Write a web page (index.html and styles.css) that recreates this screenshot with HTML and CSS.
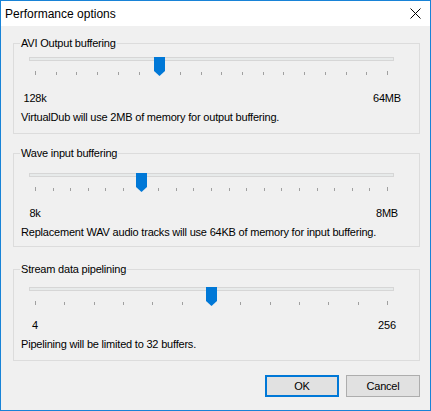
FILE: index.html
```html
<!DOCTYPE html>
<html lang="en">
<head>
    <meta charset="UTF-8">
    <title>Performance options</title>
    <link rel="stylesheet" href="styles.css">
</head>
<body>
    <div class="dialog">
        <div class="titlebar">
            <span class="title">Performance options</span>
            <svg class="close" width="11" height="11" viewBox="0 0 11 11">
                <path d="M0.5 0.5L10.5 10.5M10.5 0.5L0.5 10.5" stroke="#000" stroke-width="1" fill="none"/>
            </svg>
        </div>

        <div class="dialog-body">
            <!-- AVI output buffering -->
            <fieldset class="group group-avi">
                <legend>AVI Output buffering</legend>
                <div class="slider">
                    <div class="track"></div>
                    <div class="ticks">
                        <span class="tick tick-end"></span>
                        <span class="tick"></span><span class="tick"></span><span class="tick"></span><span class="tick"></span>
                        <span class="tick"></span><span class="tick"></span><span class="tick"></span><span class="tick"></span>
                        <span class="tick"></span><span class="tick"></span><span class="tick"></span><span class="tick"></span>
                        <span class="tick"></span><span class="tick"></span><span class="tick"></span><span class="tick"></span>
                        <span class="tick tick-end"></span>
                    </div>
                    <svg class="thumb" style="--pos: 0.3529" width="11" height="19" viewBox="0 0 11 19">
                        <polygon points="0,0 11,0 11,14 5.5,19 0,14" fill="#0078d7"/>
                    </svg>
                </div>
                <div class="scale"><span>128k</span><span>64MB</span></div>
                <p class="desc">VirtualDub will use 2MB of memory for output buffering.</p>
            </fieldset>

            <!-- Wave input buffering -->
            <fieldset class="group group-wave">
                <legend>Wave input buffering</legend>
                <div class="slider">
                    <div class="track"></div>
                    <div class="ticks">
                        <span class="tick tick-end"></span>
                        <span class="tick"></span><span class="tick"></span><span class="tick"></span><span class="tick"></span>
                        <span class="tick"></span><span class="tick"></span><span class="tick"></span><span class="tick"></span>
                        <span class="tick"></span><span class="tick"></span><span class="tick"></span><span class="tick"></span>
                        <span class="tick"></span><span class="tick"></span><span class="tick"></span><span class="tick"></span>
                        <span class="tick"></span><span class="tick"></span><span class="tick"></span>
                        <span class="tick tick-end"></span>
                    </div>
                    <svg class="thumb" style="--pos: 0.3" width="11" height="19" viewBox="0 0 11 19">
                        <polygon points="0,0 11,0 11,14 5.5,19 0,14" fill="#0078d7"/>
                    </svg>
                </div>
                <div class="scale"><span>8k</span><span>8MB</span></div>
                <p class="desc">Replacement WAV audio tracks will use 64KB of memory for input buffering.</p>
            </fieldset>

            <!-- Stream data pipelining -->
            <fieldset class="group group-pipe">
                <legend>Stream data pipelining</legend>
                <div class="slider">
                    <div class="track"></div>
                    <div class="ticks">
                        <span class="tick tick-end"></span>
                        <span class="tick"></span><span class="tick"></span><span class="tick"></span><span class="tick"></span>
                        <span class="tick"></span><span class="tick"></span><span class="tick"></span><span class="tick"></span>
                        <span class="tick"></span><span class="tick"></span><span class="tick"></span>
                        <span class="tick tick-end"></span>
                    </div>
                    <svg class="thumb" style="--pos: 0.5" width="11" height="19" viewBox="0 0 11 19">
                        <polygon points="0,0 11,0 11,14 5.5,19 0,14" fill="#0078d7"/>
                    </svg>
                </div>
                <div class="scale"><span>4</span><span>256</span></div>
                <p class="desc">Pipelining will be limited to 32 buffers.</p>
            </fieldset>

            <div class="buttons">
                <button class="btn btn-default">OK</button>
                <button class="btn">Cancel</button>
            </div>
        </div>
    </div>
</body>
</html>
```

FILE: styles.css
```css
body {
    margin: 0;
    font-family: 'Liberation Sans', Arial, sans-serif;
    font-size: 11px;
    line-height: 13px;
    letter-spacing: -0.2px;
    color: #000;
    background: #f0f0f0;
}

.dialog {
    width: 431px;
    height: 411px;
    box-sizing: border-box;
    border: 1px solid #1883d7;
    background: #f0f0f0;
}

.titlebar {
    height: 25px;
    background: #fff;
    display: flex;
    align-items: center;
    justify-content: space-between;
    padding: 0 9px 0 4px;
}

.title {
    font-size: 12px;
    line-height: 14px;
    letter-spacing: 0;
}

.close {
    display: block;
}

.dialog-body {
    padding: 11px 10px 0 12px;
}

/* group boxes */
.group {
    margin: 0;
    min-width: 0;
    border: 1px solid #dcdcdc;
    padding: 0 18px 9px 7px;
}

.group legend {
    padding: 0 1px;
    margin-left: -1px;
    line-height: 13px;
}

.group-wave {
    margin-top: 13px;
    padding-bottom: 7px;
}

.group-pipe {
    margin-top: 16px;
}

/* slider */
.slider {
    position: relative;
    height: 24px;
    margin: 7px 7px 0 8px;
}

.group-wave .slider {
    margin-top: 13px;
}

.group-pipe .slider {
    margin-top: 11px;
}

.track {
    height: 4px;
    box-sizing: border-box;
    margin-top: 6px;
    border: 1px solid #d6d6d6;
    background: #e7eaea;
}

.ticks {
    display: flex;
    justify-content: space-between;
    align-items: flex-end;
    height: 4px;
    margin-top: 10px;
    padding: 0 6px;
}

.tick {
    width: 1px;
    height: 3px;
    background: #a0a0a0;
}

.tick-end {
    height: 4px;
}

.thumb {
    position: absolute;
    top: 0;
    left: calc(1px + (100% - 13px) * var(--pos));
    display: block;
}

/* min / max labels */
.scale {
    display: flex;
    justify-content: space-between;
    margin-top: 11px;
}

.group-wave .scale {
    margin-top: 10px;
}

.group-pipe .scale {
    margin-top: 8px;
}

.scale span {
    width: 28px;
    display: flex;
    justify-content: center;
    white-space: nowrap;
}

.desc {
    margin: 6px 0 0;
    white-space: nowrap;
}

/* buttons */
.buttons {
    display: flex;
    justify-content: flex-end;
    gap: 7px;
    margin-top: 14px;
}

.btn {
    width: 74px;
    height: 22px;
    box-sizing: border-box;
    padding: 0;
    background: #e1e1e1;
    border: 1px solid #adadad;
    font-family: 'Liberation Sans', Arial, sans-serif;
    font-size: 11px;
    letter-spacing: -0.2px;
    color: #000;
}

.btn-default {
    border: 2px solid #0078d7;
}
```
